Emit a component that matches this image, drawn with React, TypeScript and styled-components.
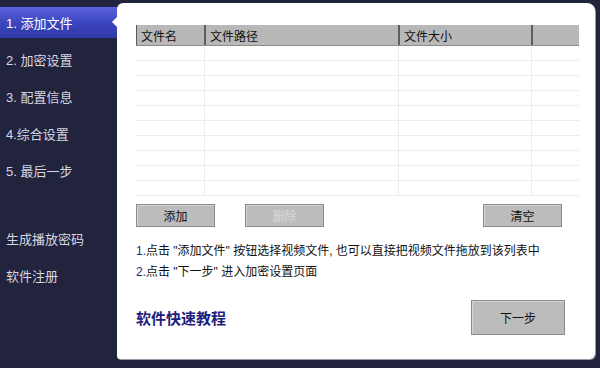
import React from "react"
import styled, { createGlobalStyle } from "styled-components"

const GlobalStyle = createGlobalStyle`
  html, body {
    margin: 0;
    padding: 0;
    background: #22233d;
  }
  body {
    font-family: "Liberation Sans", "Noto Sans CJK SC", sans-serif;
  }
`

const steps = ["1. 添加文件", "2. 加密设置", "3. 配置信息", "4.综合设置", "5. 最后一步"]
const extras = ["生成播放密码", "软件注册"]
const columns = ["文件名", "文件路径", "文件大小", ""]
const colTemplate = "69px 194px 133px 47px"

export default function App() {
  const rows = Array.from({ length: 10 })

  return (
    <S.Window>
      <GlobalStyle />
      <S.Sidebar>
        {steps.map((label, i) => (
          <S.MenuItem key={label} active={i === 0}>
            {label}
          </S.MenuItem>
        ))}
        <S.MenuGap />
        {extras.map((label) => (
          <S.MenuItem key={label}>{label}</S.MenuItem>
        ))}
      </S.Sidebar>

      <S.Panel>
        <S.Notch />
        <S.Table>
          <S.HeaderRow>
            {columns.map((c, i) => (
              <S.HeaderCell key={i}>{c}</S.HeaderCell>
            ))}
          </S.HeaderRow>
          {rows.map((_, r) => (
            <S.BodyRow key={r}>
              {columns.map((_, i) => (
                <S.BodyCell key={i} />
              ))}
            </S.BodyRow>
          ))}
        </S.Table>

        <S.ButtonRow>
          <S.Button>添加</S.Button>
          <S.Button disabled>删除</S.Button>
          <S.Spacer />
          <S.Button>清空</S.Button>
        </S.ButtonRow>

        <S.Notes>
          <S.Note>
            <S.Num>1.</S.Num>点击 "添加文件" 按钮选择视频文件, 也可以直接把视频文件拖放到该列表中
          </S.Note>
          <S.Note>
            <S.Num>2.</S.Num>点击 "下一步" 进入加密设置页面
          </S.Note>
        </S.Notes>

        <S.Footer>
          <S.Tutorial>软件快速教程</S.Tutorial>
          <S.NextButton>下一步</S.NextButton>
        </S.Footer>
      </S.Panel>
    </S.Window>
  )
}

const S = {
  Window: styled.div`
    display: flex;
    width: 600px;
    height: 368px;
    background: #22233d;
    overflow: hidden;
  `,
  Sidebar: styled.div`
    width: 117px;
    flex-shrink: 0;
    display: flex;
    flex-direction: column;
    padding-top: 7px;
  `,
  MenuItem: styled.div<{ active?: boolean }>`
    height: 31px;
    margin-bottom: 6px;
    display: flex;
    align-items: center;
    padding-left: 6px;
    font-size: 13px;
    color: ${(p) => (p.active ? "#ffffff" : "#d6d7e2")};
    background: ${(p) => (p.active ? "linear-gradient(#5a63dc, #3a44bc 55%, #3039a8)" : "transparent")};
  `,
  MenuGap: styled.div`
    height: 31px;
  `,
  Panel: styled.div`
    position: relative;
    flex: 1;
    margin: 3px 5px 9px 0;
    background: #ffffff;
    border-radius: 6px 8px 6px 3px;
    box-shadow: 1px 1px 0 #9a9aa8;
    padding: 22px 16px 0 19px;
    display: flex;
    flex-direction: column;
  `,
  Notch: styled.div`
    position: absolute;
    left: -5px;
    top: 14px;
    width: 0;
    height: 0;
    border-top: 5px solid transparent;
    border-bottom: 5px solid transparent;
    border-right: 5px solid #ffffff;
  `,
  Table: styled.div`
    width: 443px;
    display: flex;
    flex-direction: column;
  `,
  HeaderRow: styled.div`
    display: grid;
    grid-template-columns: ${colTemplate};
    height: 21px;
    background: #b8b8b8;
    border-left: 1px solid #5a5a5a;
    border-bottom: 1px solid #8c8c8c;
    box-sizing: border-box;
  `,
  HeaderCell: styled.div`
    display: flex;
    align-items: center;
    padding-left: 4px;
    font-size: 12px;
    color: #111;
    border-right: 2px solid #5e5e5e;
    &:last-child {
      border-right: none;
    }
  `,
  BodyRow: styled.div`
    display: grid;
    grid-template-columns: ${colTemplate};
    height: 15px;
    border-bottom: 1px solid #ececec;
    box-sizing: border-box;
  `,
  BodyCell: styled.div`
    border-right: 1px solid #ececec;
    &:last-child {
      border-right: none;
    }
  `,
  ButtonRow: styled.div`
    display: flex;
    gap: 30px;
    width: 426px;
    margin-top: 8px;
  `,
  Spacer: styled.div`
    flex: 1;
  `,
  Button: styled.button`
    width: 79px;
    height: 23px;
    padding: 0;
    background: #bcbcbc;
    border: 1px solid #8a8a8a;
    border-radius: 0;
    box-shadow: inset 1px 1px 0 #d4d4d4;
    font-family: inherit;
    font-size: 12px;
    color: #111;
    &:disabled {
      color: #dadada;
    }
  `,
  Notes: styled.div`
    display: flex;
    flex-direction: column;
    gap: 6px;
    margin-top: 17px;
  `,
  Note: styled.div`
    font-size: 12px;
    line-height: 15px;
    color: #111;
  `,
  Num: styled.span`
    color: #1c2a7a;
  `,
  Footer: styled.div`
    display: flex;
    align-items: center;
    justify-content: space-between;
    margin-top: 20px;
    padding-right: 14px;
  `,
  Tutorial: styled.div`
    font-size: 15px;
    font-weight: bold;
    color: #1e1e7c;
  `,
  NextButton: styled.button`
    width: 94px;
    height: 35px;
    padding: 0;
    background: #bcbcbc;
    border: 1px solid #8a8a8a;
    border-radius: 0;
    box-shadow: inset 1px 1px 0 #d4d4d4;
    font-family: inherit;
    font-size: 12px;
    color: #111;
  `,
}
